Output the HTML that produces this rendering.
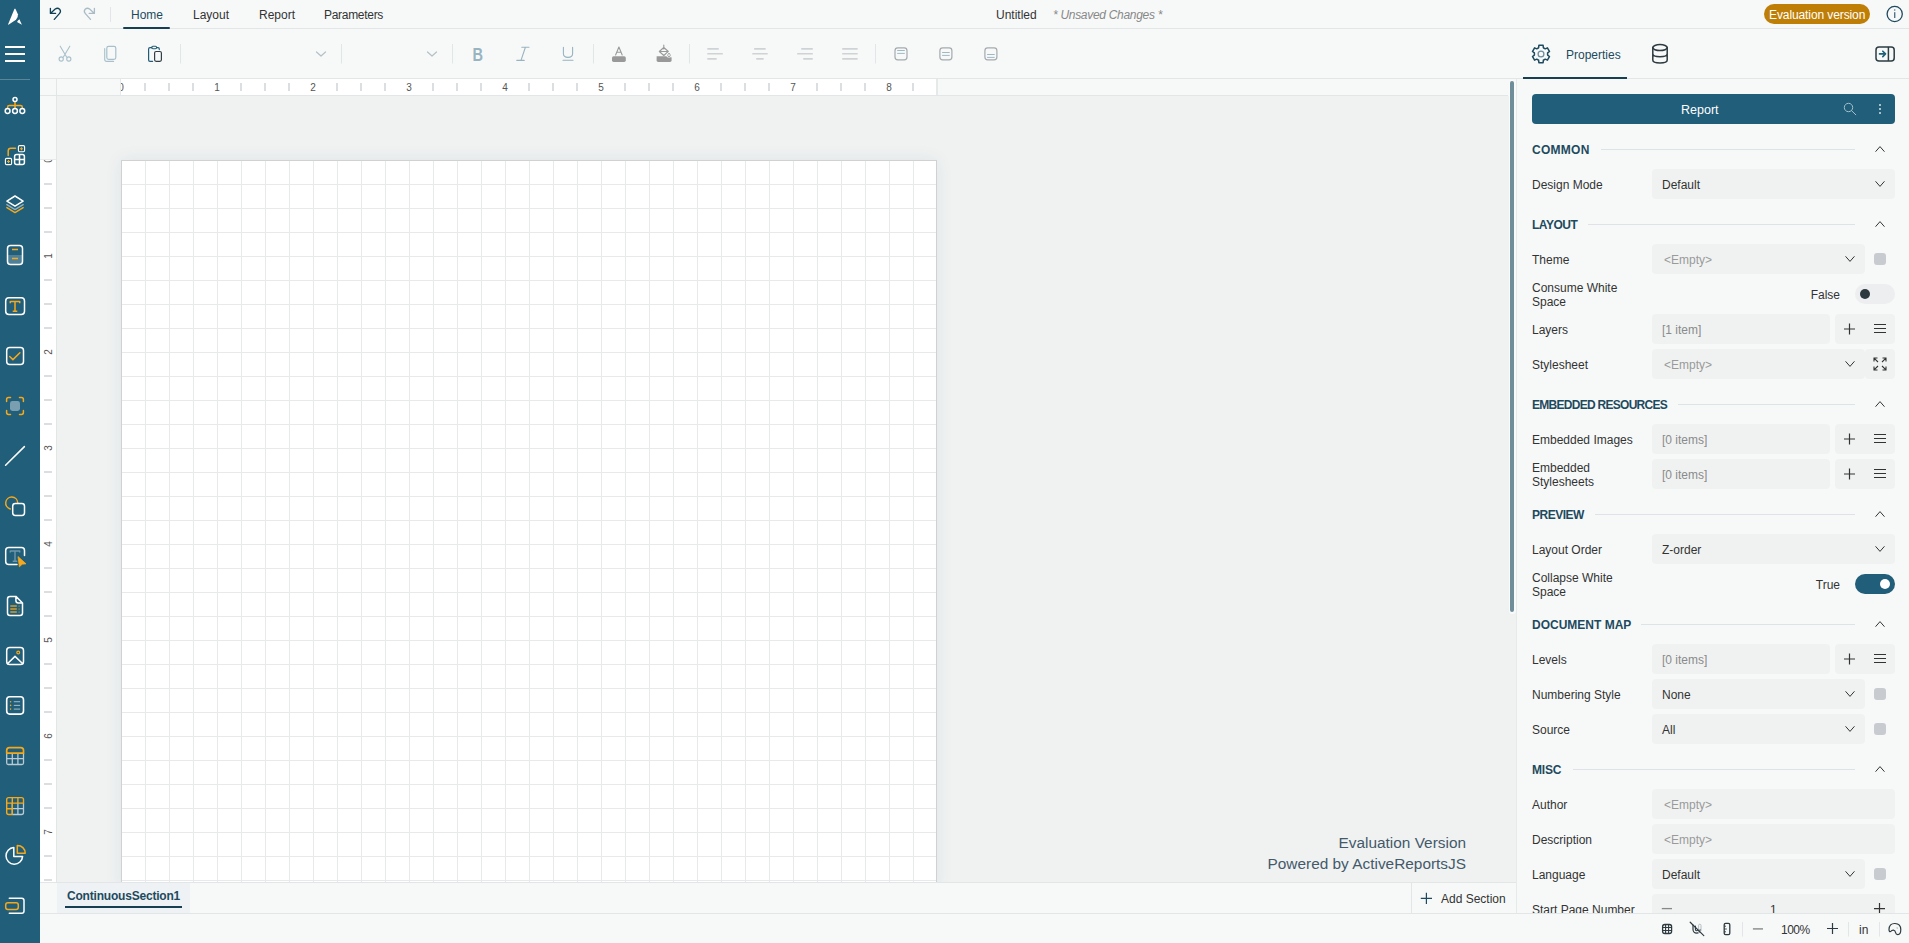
<!DOCTYPE html><html><head><meta charset="utf-8"><style>
*{box-sizing:border-box}
html,body{margin:0;padding:0}
body{width:1909px;height:943px;overflow:hidden;position:relative;background:#f7f9f9;font-family:"Liberation Sans",sans-serif;color:#333}
.a{position:absolute}
.t{position:absolute;white-space:nowrap;line-height:1}
svg{position:absolute;overflow:visible}
</style></head><body><div class="a" style="left:0;top:0;width:40px;height:943px;background:#205e79"></div>
<div class="a" style="left:0;top:79px;width:30px;height:1px;background:#5b8599"></div>
<svg class="a" style="left:0px;top:0px" width="40" height="943" viewBox="0 0 40 943" ><path d="M14.5 8.8 L15.4 8.8 L17.9 14.2 Q18.3 17.6 16 19.7 L8.4 24.8 L8 24.4 Z" fill="#ffffff"/><path d="M19.4 19.2 L21.9 24.8 L17 21.9 Q17.9 20.3 19.4 19.2 Z" fill="#ffffff"/><rect x="5" y="46" width="20" height="2" fill="#ffffff"/><rect x="5" y="53" width="20" height="2" fill="#ffffff"/><rect x="5" y="60" width="20" height="2" fill="#ffffff"/><path d="M15 101.8 V108.6 M7.6 108.6 V107.3 Q7.6 105.6 9.3 105.6 H20.6 Q22.3 105.6 22.3 107.3 V108.6" stroke="#f5a81c" stroke-width="1.5" fill="none" stroke-linecap="round" stroke-linejoin="round"/><circle cx="15" cy="99.6" r="2" stroke="#ffffff" stroke-width="1.5" fill="none" stroke-linecap="round" stroke-linejoin="round"/><circle cx="7.6" cy="111" r="2.4" stroke="#ffffff" stroke-width="1.5" fill="none" stroke-linecap="round" stroke-linejoin="round"/><circle cx="15" cy="111" r="2.4" stroke="#ffffff" stroke-width="1.5" fill="none" stroke-linecap="round" stroke-linejoin="round"/><circle cx="22.3" cy="111" r="2.4" stroke="#ffffff" stroke-width="1.5" fill="none" stroke-linecap="round" stroke-linejoin="round"/><path d="M8.2 155.5 V151 Q8.2 148.3 10.9 148.3 H15.5" stroke="#f5a81c" stroke-width="1.5" fill="none" stroke-linecap="round" stroke-linejoin="round"/><rect x="18.4" y="145.6" width="6.2" height="6.2" rx="1.2" stroke="#ffffff" stroke-width="1.1" fill="none"/><path d="M21.5 147.2 V150.2 M20 148.7 H23" stroke="#f5a81c" stroke-width="1.1"/><rect x="5.4" y="158.4" width="6.2" height="6.2" rx="1.2" stroke="#ffffff" stroke-width="1.1" fill="none"/><path d="M8.5 160 V163 M7 161.5 H10" stroke="#f5a81c" stroke-width="1.1"/><rect x="14.6" y="154.6" width="9.8" height="9.8" rx="2" stroke="#ffffff" stroke-width="1.5" fill="none"/><path d="M19.5 154.6 V164.4 M14.6 159.5 H24.4" stroke="#ffffff" stroke-width="1.5"/><path d="M6.9 207.6 L15 212.6 L23.1 207.6" stroke="#f5a81c" stroke-width="1.5" fill="none" stroke-linecap="round" stroke-linejoin="round"/><path d="M6.9 204.6 L15 209.6 L23.1 204.6" stroke="#8fb0be" stroke-width="1.5" fill="none" stroke-linecap="round" stroke-linejoin="round"/><path d="M6.9 201.1 L15 196 L23.1 201.1 L15 206.2 Z" stroke="#ffffff" stroke-width="1.5" fill="none" stroke-linecap="round" stroke-linejoin="round"/><rect x="7.8" y="255" width="14.4" height="9.3" fill="#4f8098"/><rect x="7.5" y="245.6" width="15" height="18.8" rx="3" stroke="#ffffff" stroke-width="1.5" fill="none" stroke-linecap="round" stroke-linejoin="round"/><path d="M12 249.5 H18 M12 258.4 H18" stroke="#f5a81c" stroke-width="1.5"/><rect x="5.7" y="297.7" width="18.8" height="16.8" rx="3.2" stroke="#ffffff" stroke-width="1.5" fill="none" stroke-linecap="round" stroke-linejoin="round"/><path d="M10.3 301.6 H19.7 M10.3 301 V303.3 M19.7 301 V303.3 M15 301.6 V311.3 M12.7 311.3 H17.3" stroke="#f5a81c" stroke-width="1.5" fill="none"/><rect x="6.7" y="347.5" width="16.8" height="16.9" rx="3" stroke="#ffffff" stroke-width="1.5" fill="none" stroke-linecap="round" stroke-linejoin="round"/><path d="M9.7 356.5 L12.9 359.6 L19.9 352.8" stroke="#f5a81c" stroke-width="1.5" fill="none" stroke-linecap="round" stroke-linejoin="round"/><rect x="10" y="401" width="10" height="10" rx="2.4" fill="#7a9fb1"/><path d="M6.6 401.5 V399.5 Q6.6 397.6 8.5 397.6 H10.5 M19.5 397.6 H21.5 Q23.4 397.6 23.4 399.5 V401.5 M23.4 410.5 V412.5 Q23.4 414.4 21.5 414.4 H19.5 M10.5 414.4 H8.5 Q6.6 414.4 6.6 412.5 V410.5" stroke="#f5a81c" stroke-width="1.5" fill="none" stroke-linecap="round" stroke-linejoin="round"/><path d="M5.6 465.2 L24.4 446.6" stroke="#ffffff" stroke-width="1.5" fill="none" stroke-linecap="round" stroke-linejoin="round"/><path d="M10.3 508.9 A6 6 0 1 1 17.7 502.7" stroke="#f5a81c" stroke-width="1.5" fill="none" stroke-linecap="round" stroke-linejoin="round"/><rect x="12.7" y="503.6" width="11.8" height="11.8" rx="2.6" stroke="#ffffff" stroke-width="1.5" fill="none" stroke-linecap="round" stroke-linejoin="round"/><path d="M24.5 555.5 V550.6 Q24.5 547.6 21.5 547.6 H8.8 Q5.7 547.6 5.7 550.6 V561.4 Q5.7 564.4 8.8 564.4 H17" stroke="#ffffff" stroke-width="1.5" fill="none" stroke-linecap="round" stroke-linejoin="round"/><path d="M10.3 551 H19.7 M10.3 550.5 V552.5 M19.7 550.5 V552.5 M15 551 V561.3 M12.7 561.3 H17.3" stroke="#6f97aa" stroke-width="1.4" fill="none"/><path d="M18 556.6 L26 563.8 L22.2 564.2 L19.4 566.8 Z" fill="#f5a81c" stroke="#f5a81c" stroke-width="0.8" stroke-linejoin="round"/><path d="M15.9 596.4 H10 Q7.5 596.4 7.5 598.9 V613 Q7.5 615.5 10 615.5 H20 Q22.5 615.5 22.5 613 V603 Z M15.9 596.4 V600.5 Q15.9 603 18.4 603 H22.5" stroke="#ffffff" stroke-width="1.5" fill="none" stroke-linecap="round" stroke-linejoin="round"/><path d="M10.3 606 H16.8" stroke="#f5a81c" stroke-width="1.3"/><circle cx="19.1" cy="606" r="0.6" fill="#f5a81c"/><path d="M10.3 609 H16.8" stroke="#f5a81c" stroke-width="1.3"/><circle cx="19.1" cy="609" r="0.6" fill="#f5a81c"/><path d="M10.3 612 H16.8" stroke="#f5a81c" stroke-width="1.3"/><circle cx="19.1" cy="612" r="0.6" fill="#f5a81c"/><rect x="6.7" y="647.5" width="16.8" height="16.9" rx="3" stroke="#ffffff" stroke-width="1.5" fill="none" stroke-linecap="round" stroke-linejoin="round"/><path d="M7.4 663.7 L15 656.4 L22.8 663.7" stroke="#ffffff" stroke-width="1.5" fill="none" stroke-linecap="round" stroke-linejoin="round"/><circle cx="18.2" cy="652.6" r="1.4" stroke="#f5a81c" stroke-width="1.2" fill="none"/><rect x="6.7" y="696.7" width="16.8" height="17.4" rx="3" stroke="#ffffff" stroke-width="1.6" fill="none"/><circle cx="10.6" cy="701.7" r="0.8" fill="#f5a81c"/><path d="M13.8 701.7 H20.1" stroke="#9bb6c3" stroke-width="1.1"/><circle cx="10.6" cy="705.4" r="0.8" fill="#f5a81c"/><path d="M13.8 705.4 H20.1" stroke="#9bb6c3" stroke-width="1.1"/><circle cx="10.6" cy="709.1" r="0.8" fill="#f5a81c"/><path d="M13.8 709.1 H20.1" stroke="#9bb6c3" stroke-width="1.1"/><path d="M6.7 753 V763 Q6.7 764.5 8.2 764.5 H22 Q23.5 764.5 23.5 763 V753 M12.3 753 V764.5 M17.9 753 V764.5 M6.7 758.7 H23.5" stroke="#b9cad2" stroke-width="1.3" fill="none"/><path d="M6.7 753.2 V750.3 Q6.7 747.6 9.4 747.6 H20.8 Q23.5 747.6 23.5 750.3 V753.2 Z" stroke="#f5a81c" stroke-width="1.7" fill="none" stroke-linejoin="round"/><path d="M12.3 808.7 H23.5 M12.3 803.1 V814.5 M17.9 803.1 V814.5 M23.5 803.1 V812.5 Q23.5 814.5 21.5 814.5 H12.3" stroke="#b9cad2" stroke-width="1.3" fill="none"/><path d="M12.3 814.5 H8.7 Q6.7 814.5 6.7 812.5 V799.6 Q6.7 797.6 8.7 797.6 H21.5 Q23.5 797.6 23.5 799.6 V803.1 H6.7 M6.7 808.7 H12.3 M12.3 797.6 V814.5 M17.9 797.6 V803.1" stroke="#f5a81c" stroke-width="1.4" fill="none" stroke-linejoin="round"/><path d="M13.8 847.6 A8.3 8.3 0 1 0 22.6 856.4 H13.8 Z" stroke="#ffffff" stroke-width="1.5" fill="none" stroke-linecap="round" stroke-linejoin="round"/><path d="M17.3 845.4 A7.8 7.8 0 0 1 25.2 853.2 H17.3 Z" stroke="#f5a81c" stroke-width="1.5" fill="none" stroke-linecap="round" stroke-linejoin="round"/><path d="M9.3 898.3 H21.7 Q24 898.3 24 900.6 V910.9 Q24 913.2 21.7 913.2 H9.3" stroke="#ffffff" stroke-width="1.5" fill="none" stroke-linecap="round" stroke-linejoin="round"/><rect x="5.7" y="902.8" width="12.6" height="6.6" rx="2.2" stroke="#f5a81c" stroke-width="1.5" fill="none" stroke-linecap="round" stroke-linejoin="round"/></svg>
<svg class="a" style="left:40px;top:0px" width="1869" height="79" viewBox="40 0 1869 79" ><path d="M50.4 8.3 V13.4 H55.6 M50.9 12.9 L55.2 9.1 Q57.6 7.3 59.6 9.2 Q61.4 11.3 59.6 13.4 L54.3 19.4" stroke="#0f3f55" stroke-width="1.3" fill="none" stroke-linecap="round" stroke-linejoin="round"/><path d="M94.4 8.3 V13.4 H89.2 M93.9 12.9 L89.6 9.1 Q87.2 7.3 85.2 9.2 Q83.4 11.3 85.2 13.4 L90.5 19.4" stroke="#a9bcc5" stroke-width="1.3" fill="none" stroke-linecap="round" stroke-linejoin="round"/><rect x="110" y="7" width="1" height="15" fill="#e2e6e7"/><circle cx="1894.7" cy="14" r="7.6" stroke="#1e4a5e" stroke-width="1.3" fill="none"/><rect x="1894" y="12.2" width="1.4" height="5.8" fill="#4f7587"/><circle cx="1894.7" cy="10" r="0.8" fill="#4f7587"/><path d="M60.2 46.2 L66.6 57 M69.8 46.2 L63.4 57" stroke="#a9c0ca" stroke-width="1.1" fill="none" stroke-linecap="round" stroke-linejoin="round"/><circle cx="61.2" cy="59" r="2.1" stroke="#a9c0ca" stroke-width="1.1" fill="none"/><circle cx="68.8" cy="59" r="2.1" stroke="#a9c0ca" stroke-width="1.1" fill="none"/><rect x="106.8" y="46.4" width="9" height="13" rx="1.8" stroke="#a9c0ca" stroke-width="1.2" fill="none"/><path d="M104.7 48.5 V59.3 Q104.7 61.4 106.8 61.4 H113.6" stroke="#a9c0ca" stroke-width="1.1" fill="none" stroke-linecap="round" stroke-linejoin="round"/><path d="M151.8 47.6 H150 Q148.6 47.6 148.6 49 V59.9 Q148.6 61.3 150 61.3 H152.6 M156.6 47.6 H158 Q159.3 47.6 159.3 49 V49.6" stroke="#215c77" stroke-width="1.2" fill="none" stroke-linecap="round" stroke-linejoin="round"/><rect x="151.7" y="46.3" width="4.9" height="2.5" rx="1.2" stroke="#215c77" stroke-width="1.1" fill="none"/><rect x="154.6" y="51.5" width="6.8" height="9.8" rx="1.5" stroke="#333f44" stroke-width="1.2" fill="none"/><rect x="180" y="44" width="1" height="19.5" fill="#e2e6e7"/><rect x="341" y="44" width="1" height="19.5" fill="#e2e6e7"/><rect x="452" y="44" width="1" height="19.5" fill="#e2e6e7"/><rect x="593" y="44" width="1" height="19.5" fill="#e2e6e7"/><rect x="689" y="44" width="1" height="19.5" fill="#e2e6e7"/><rect x="875" y="44" width="1" height="19.5" fill="#e2e6e7"/><path d="M316.5 52 L321 56 L325.5 52" stroke="#b5c0c5" stroke-width="1.2" fill="none" stroke-linecap="round" stroke-linejoin="round"/><path d="M427.5 52 L432 56 L436.5 52" stroke="#b5c0c5" stroke-width="1.2" fill="none" stroke-linecap="round" stroke-linejoin="round"/><text transform="translate(472.5 60.8) scale(0.76 1)" font-family="Liberation Sans" font-weight="bold" font-size="19.2" fill="#98b4c0">B</text><path d="M525.4 47.3 L521 60.4 M521.8 47.3 H529 M516.8 60.4 H524.2" stroke="#98b4c0" stroke-width="1.1" fill="none" stroke-linecap="round" stroke-linejoin="round"/><path d="M563.4 47.4 V53.8 Q563.4 57.4 568 57.4 Q572.6 57.4 572.6 53.8 V47.4 M563 60.3 H573" stroke="#98b4c0" stroke-width="1.1" fill="none" stroke-linecap="round" stroke-linejoin="round"/><path d="M615.6 55 L618.9 47 L622.2 55 M616.8 52.3 H621" stroke="#9a9a9a" stroke-width="1.1" fill="none" stroke-linecap="round" stroke-linejoin="round"/><rect x="612" y="56.3" width="13.8" height="5.6" rx="1.6" fill="#999"/><path d="M663.8 45 V49 M659.3 51.5 L663.8 47.5 L668.3 51.5 L663.8 55.5 Z M659.3 51.5 H668.3" stroke="#9a9a9a" stroke-width="1.1" fill="none" stroke-linecap="round" stroke-linejoin="round"/><path d="M656.6 56.3 H670 Q671.6 56.3 671.6 57.9 V60.3 Q671.6 61.9 670 61.9 H658.2 Q656.6 61.9 656.6 60.3 Z" fill="#999"/><circle cx="669" cy="55" r="2.6" fill="#f7f9f9"/><path d="M669 53 Q670.3 54.6 670.3 55.4 Q670.3 56.6 669 56.6 Q667.7 56.6 667.7 55.4 Q667.7 54.6 669 53 Z" stroke="#9a9a9a" stroke-width="0.9" fill="none"/><rect x="707.2" y="48.1" width="11.699999999999932" height="1.6" rx="0.6" fill="#cfd3d5"/><rect x="707.2" y="53.0" width="15.699999999999932" height="1.6" rx="0.6" fill="#cfd3d5"/><rect x="707.2" y="58.1" width="9.599999999999909" height="1.6" rx="0.6" fill="#cfd3d5"/><rect x="754" y="48.1" width="11.799999999999955" height="1.6" rx="0.6" fill="#cfd3d5"/><rect x="752.2" y="53.0" width="15.599999999999909" height="1.6" rx="0.6" fill="#cfd3d5"/><rect x="756.1" y="58.1" width="7.699999999999932" height="1.6" rx="0.6" fill="#cfd3d5"/><rect x="801.1" y="48.1" width="11.799999999999955" height="1.6" rx="0.6" fill="#cfd3d5"/><rect x="797.1" y="53.0" width="15.799999999999955" height="1.6" rx="0.6" fill="#cfd3d5"/><rect x="803.1" y="58.1" width="9.799999999999955" height="1.6" rx="0.6" fill="#cfd3d5"/><rect x="842.1" y="48.1" width="15.699999999999932" height="1.6" rx="0.6" fill="#cfd3d5"/><rect x="842.1" y="53.0" width="15.699999999999932" height="1.6" rx="0.6" fill="#cfd3d5"/><rect x="842.1" y="58.1" width="15.699999999999932" height="1.6" rx="0.6" fill="#cfd3d5"/><rect x="895.0" y="47.9" width="12" height="12" rx="2.8" stroke="#a5aaae" stroke-width="1.2" fill="none"/><path d="M897.1999999999999 50.5 H904.8 M897.1999999999999 53.4 H904.8" stroke="#9fb8c4" stroke-width="1"/><rect x="939.9" y="47.9" width="12" height="12" rx="2.8" stroke="#a5aaae" stroke-width="1.2" fill="none"/><path d="M942.0999999999999 52.5 H949.6999999999999 M942.0999999999999 55.4 H949.6999999999999" stroke="#9fb8c4" stroke-width="1"/><rect x="984.9" y="47.9" width="12" height="12" rx="2.8" stroke="#a5aaae" stroke-width="1.2" fill="none"/><path d="M987.0999999999999 54.5 H994.6999999999999 M987.0999999999999 57.4 H994.6999999999999" stroke="#9fb8c4" stroke-width="1"/></svg>
<div class="a" style="left:40px;top:28px;width:1869px;height:1px;background:#e2e6e7"></div>
<div class="t" style="left:131px;top:9px;font-size:12px;color:#1e4a5e">Home</div>
<div class="a" style="left:123px;top:27px;width:47px;height:2px;background:#173f52;border-radius:1px"></div>
<div class="t" style="left:193px;top:9px;font-size:12px;color:#333">Layout</div>
<div class="t" style="left:259px;top:9px;font-size:12px;color:#333">Report</div>
<div class="t" style="left:324px;top:9px;font-size:12px;color:#333;letter-spacing:-0.3px">Parameters</div>
<div class="t" style="left:996px;top:9px;font-size:12px;color:#333">Untitled</div>
<div class="t" style="left:1053px;top:9px;font-size:12px;font-style:italic;color:#888;letter-spacing:-0.3px">* Unsaved Changes *</div>
<div class="a" style="left:1764px;top:4px;width:106px;height:20px;border-radius:10px;background:#bf7f07"></div>
<div class="t" style="left:1769px;top:9px;font-size:12px;color:#fff;letter-spacing:-0.1px">Evaluation version</div>
<div class="a" style="left:40px;top:78px;width:1869px;height:1px;background:#e2e6e7"></div>
<div class="a" style="left:1523px;top:77px;width:104px;height:2px;background:#173f52"></div>
<div class="t" style="left:1566px;top:49px;font-size:12px;color:#1e4a5e">Properties</div>
<div class="a" style="left:121px;top:79px;width:815px;height:16px;background:#fff"></div>
<div class="a" style="left:120px;top:79px;width:1px;height:16px;background:#e6e9ea"></div>
<div class="a" style="left:936px;top:79px;width:2px;height:16px;background:#e6e9ea"></div>
<div class="a" style="left:40px;top:95px;width:1468px;height:1px;background:#e2e6e7"></div>
<div class="a" style="left:57px;top:96px;width:1459px;height:786px;background:#f0f2f2"></div>
<div class="a" style="left:56px;top:79px;width:1px;height:834px;background:#e2e6e7"></div>
<div class="a" style="left:40px;top:159px;width:16px;height:1px;background:#e6e9ea"></div>
<div class="a" style="left:40px;top:160px;width:16px;height:722px;background:#fff"></div>
<div class="t" style="left:111px;top:83px;width:20px;text-align:center;font-size:10px;color:#555">0</div>
<div class="a" style="left:144px;top:83px;width:2px;height:8px;background:#dcdfe1"></div>
<div class="a" style="left:168px;top:83px;width:2px;height:8px;background:#dcdfe1"></div>
<div class="a" style="left:192px;top:83px;width:2px;height:8px;background:#dcdfe1"></div>
<div class="t" style="left:207px;top:83px;width:20px;text-align:center;font-size:10px;color:#555">1</div>
<div class="a" style="left:240px;top:83px;width:2px;height:8px;background:#dcdfe1"></div>
<div class="a" style="left:264px;top:83px;width:2px;height:8px;background:#dcdfe1"></div>
<div class="a" style="left:288px;top:83px;width:2px;height:8px;background:#dcdfe1"></div>
<div class="t" style="left:303px;top:83px;width:20px;text-align:center;font-size:10px;color:#555">2</div>
<div class="a" style="left:336px;top:83px;width:2px;height:8px;background:#dcdfe1"></div>
<div class="a" style="left:360px;top:83px;width:2px;height:8px;background:#dcdfe1"></div>
<div class="a" style="left:384px;top:83px;width:2px;height:8px;background:#dcdfe1"></div>
<div class="t" style="left:399px;top:83px;width:20px;text-align:center;font-size:10px;color:#555">3</div>
<div class="a" style="left:432px;top:83px;width:2px;height:8px;background:#dcdfe1"></div>
<div class="a" style="left:456px;top:83px;width:2px;height:8px;background:#dcdfe1"></div>
<div class="a" style="left:480px;top:83px;width:2px;height:8px;background:#dcdfe1"></div>
<div class="t" style="left:495px;top:83px;width:20px;text-align:center;font-size:10px;color:#555">4</div>
<div class="a" style="left:528px;top:83px;width:2px;height:8px;background:#dcdfe1"></div>
<div class="a" style="left:552px;top:83px;width:2px;height:8px;background:#dcdfe1"></div>
<div class="a" style="left:576px;top:83px;width:2px;height:8px;background:#dcdfe1"></div>
<div class="t" style="left:591px;top:83px;width:20px;text-align:center;font-size:10px;color:#555">5</div>
<div class="a" style="left:624px;top:83px;width:2px;height:8px;background:#dcdfe1"></div>
<div class="a" style="left:648px;top:83px;width:2px;height:8px;background:#dcdfe1"></div>
<div class="a" style="left:672px;top:83px;width:2px;height:8px;background:#dcdfe1"></div>
<div class="t" style="left:687px;top:83px;width:20px;text-align:center;font-size:10px;color:#555">6</div>
<div class="a" style="left:720px;top:83px;width:2px;height:8px;background:#dcdfe1"></div>
<div class="a" style="left:744px;top:83px;width:2px;height:8px;background:#dcdfe1"></div>
<div class="a" style="left:768px;top:83px;width:2px;height:8px;background:#dcdfe1"></div>
<div class="t" style="left:783px;top:83px;width:20px;text-align:center;font-size:10px;color:#555">7</div>
<div class="a" style="left:816px;top:83px;width:2px;height:8px;background:#dcdfe1"></div>
<div class="a" style="left:840px;top:83px;width:2px;height:8px;background:#dcdfe1"></div>
<div class="a" style="left:864px;top:83px;width:2px;height:8px;background:#dcdfe1"></div>
<div class="t" style="left:879px;top:83px;width:20px;text-align:center;font-size:10px;color:#555">8</div>
<div class="a" style="left:912px;top:83px;width:2px;height:8px;background:#dcdfe1"></div>
<div class="a" style="left:40px;top:160px;width:16px;height:722px;overflow:hidden"><div class="t" style="left:-1px;top:-5px;width:20px;text-align:center;font-size:10px;color:#555;transform:rotate(-90deg)">0</div><div class="a" style="left:4px;top:23px;width:8px;height:2px;background:#dcdfe1"></div><div class="a" style="left:4px;top:47px;width:8px;height:2px;background:#dcdfe1"></div><div class="a" style="left:4px;top:71px;width:8px;height:2px;background:#dcdfe1"></div><div class="t" style="left:-1px;top:91px;width:20px;text-align:center;font-size:10px;color:#555;transform:rotate(-90deg)">1</div><div class="a" style="left:4px;top:119px;width:8px;height:2px;background:#dcdfe1"></div><div class="a" style="left:4px;top:143px;width:8px;height:2px;background:#dcdfe1"></div><div class="a" style="left:4px;top:167px;width:8px;height:2px;background:#dcdfe1"></div><div class="t" style="left:-1px;top:187px;width:20px;text-align:center;font-size:10px;color:#555;transform:rotate(-90deg)">2</div><div class="a" style="left:4px;top:215px;width:8px;height:2px;background:#dcdfe1"></div><div class="a" style="left:4px;top:239px;width:8px;height:2px;background:#dcdfe1"></div><div class="a" style="left:4px;top:263px;width:8px;height:2px;background:#dcdfe1"></div><div class="t" style="left:-1px;top:283px;width:20px;text-align:center;font-size:10px;color:#555;transform:rotate(-90deg)">3</div><div class="a" style="left:4px;top:311px;width:8px;height:2px;background:#dcdfe1"></div><div class="a" style="left:4px;top:335px;width:8px;height:2px;background:#dcdfe1"></div><div class="a" style="left:4px;top:359px;width:8px;height:2px;background:#dcdfe1"></div><div class="t" style="left:-1px;top:379px;width:20px;text-align:center;font-size:10px;color:#555;transform:rotate(-90deg)">4</div><div class="a" style="left:4px;top:407px;width:8px;height:2px;background:#dcdfe1"></div><div class="a" style="left:4px;top:431px;width:8px;height:2px;background:#dcdfe1"></div><div class="a" style="left:4px;top:455px;width:8px;height:2px;background:#dcdfe1"></div><div class="t" style="left:-1px;top:475px;width:20px;text-align:center;font-size:10px;color:#555;transform:rotate(-90deg)">5</div><div class="a" style="left:4px;top:503px;width:8px;height:2px;background:#dcdfe1"></div><div class="a" style="left:4px;top:527px;width:8px;height:2px;background:#dcdfe1"></div><div class="a" style="left:4px;top:551px;width:8px;height:2px;background:#dcdfe1"></div><div class="t" style="left:-1px;top:571px;width:20px;text-align:center;font-size:10px;color:#555;transform:rotate(-90deg)">6</div><div class="a" style="left:4px;top:599px;width:8px;height:2px;background:#dcdfe1"></div><div class="a" style="left:4px;top:623px;width:8px;height:2px;background:#dcdfe1"></div><div class="a" style="left:4px;top:647px;width:8px;height:2px;background:#dcdfe1"></div><div class="t" style="left:-1px;top:667px;width:20px;text-align:center;font-size:10px;color:#555;transform:rotate(-90deg)">7</div><div class="a" style="left:4px;top:695px;width:8px;height:2px;background:#dcdfe1"></div><div class="a" style="left:4px;top:719px;width:8px;height:2px;background:#dcdfe1"></div></div>
<div class="a" style="left:110px;top:79px;width:10px;height:16px;background:#f7f9f9"></div>
<div class="a" style="left:120px;top:79px;width:1px;height:16px;background:#e6e9ea"></div>
<div class="a" style="left:121px;top:160px;width:816px;height:730px;border:1px solid #d0d1d2;box-shadow:0 0 16px rgba(30,74,94,0.08);background-color:#fff;background-image:linear-gradient(to right,#e8e9ea 1px,transparent 1px),linear-gradient(to bottom,#e8e9ea 1px,transparent 1px);background-size:24px 24px;background-position:-1px -1px"></div>
<div class="a" style="left:1508.5px;top:79.5px;width:7px;height:534px;border-radius:3.5px;background:#f9fafa"></div><div class="a" style="left:1510px;top:81px;width:4px;height:531px;border-radius:2px;background:#6f8e9a"></div>
<div class="t" style="left:1200px;top:832px;width:266px;text-align:right;font-size:15.4px;line-height:21px;color:#44596a">Evaluation Version<br>Powered by ActiveReportsJS</div>
<div class="a" style="left:40px;top:882px;width:1476px;height:31px;background:#f7f9f9;border-top:1px solid #e2e6e7"></div>
<div class="a" style="left:57px;top:883px;width:133px;height:30px;background:#eef2f4"></div>
<div class="t" style="left:67px;top:890px;font-size:12px;font-weight:bold;color:#1e4a5e;letter-spacing:-0.2px">ContinuousSection1</div>
<div class="a" style="left:65px;top:906px;width:117px;height:2px;background:#173f52"></div>
<div class="a" style="left:1411px;top:883px;width:1px;height:30px;background:#e2e6e7"></div>
<div class="t" style="left:1441px;top:893px;font-size:12px;color:#333">Add Section</div>
<div class="a" style="left:40px;top:913px;width:1869px;height:1px;background:#e2e6e7"></div>
<div class="t" style="left:1781px;top:924px;letter-spacing:-0.5px;font-size:12px;color:#333">100%</div>
<div class="t" style="left:1859px;top:924px;font-size:12px;color:#333">in</div>
<div class="a" style="left:1516px;top:79px;width:1px;height:834px;background:#e6eaeb"></div>
<div class="a" style="left:1532px;top:94px;width:363px;height:30px;border-radius:4px;background:#205e79"></div>
<div class="t" style="left:1681px;top:104px;font-size:12.5px;color:#fff">Report</div>
<div class="a" style="left:0;top:0;width:1909px;height:913px;overflow:hidden;clip-path:inset(79px 0 0 1516px)"><div class="t" style="left:1532px;top:143.8px;font-size:12px;color:#1e4a5e;font-weight:bold;letter-spacing:0.27px">COMMON</div><div class="a" style="left:1600.6px;top:149px;width:254.4000000000001px;height:1px;background:#dde3e6"></div><div class="t" style="left:1532px;top:179.3px;font-size:12px;color:#333;">Design Mode</div><div class="a" style="left:1652px;top:169px;width:243px;height:30px;background:#f0f2f2;border-radius:4px;"></div><div class="t" style="left:1662px;top:179.3px;font-size:12px;color:#333;">Default</div><div class="t" style="left:1532px;top:218.8px;font-size:12px;color:#1e4a5e;font-weight:bold;letter-spacing:-0.47px">LAYOUT</div><div class="a" style="left:1588.4px;top:224px;width:266.5999999999999px;height:1px;background:#dde3e6"></div><div class="t" style="left:1532px;top:254.3px;font-size:12px;color:#333;">Theme</div><div class="a" style="left:1652px;top:244px;width:213px;height:30px;background:#f0f2f2;border-radius:4px;"></div><div class="t" style="left:1664px;top:254.3px;font-size:12px;color:#9a9a9a;">&lt;Empty&gt;</div><div class="a" style="left:1874px;top:253px;width:12px;height:12px;background:#c8ccd0;border-radius:3px;"></div><div class="t" style="left:1532px;top:281.5px;font-size:12px;color:#333;">Consume White</div><div class="t" style="left:1532px;top:296.1px;font-size:12px;color:#333;">Space</div><div class="t" style="left:1640px;width:200px;text-align:right;top:288.8px;font-size:12px;color:#333;">False</div><div class="a" style="left:1855px;top:284px;width:40px;height:20px;background:#eceeef;border-radius:10px;"></div><div class="a" style="left:1860px;top:289px;width:10px;height:10px;background:#2d3a40;border-radius:5px;"></div><div class="t" style="left:1532px;top:324.3px;font-size:12px;color:#333;">Layers</div><div class="a" style="left:1652px;top:314px;width:178px;height:30px;background:#f0f2f2;border-radius:4px;"></div><div class="t" style="left:1662px;top:324.3px;font-size:12px;color:#8a8a8a;">[1 item]</div><div class="a" style="left:1835px;top:314px;width:60px;height:30px;background:#f0f2f2;border-radius:4px;"></div><div class="t" style="left:1532px;top:359.3px;font-size:12px;color:#333;">Stylesheet</div><div class="a" style="left:1652px;top:349px;width:213px;height:30px;background:#f0f2f2;border-radius:4px;"></div><div class="t" style="left:1664px;top:359.3px;font-size:12px;color:#9a9a9a;">&lt;Empty&gt;</div><div class="a" style="left:1865px;top:349px;width:30px;height:30px;background:#f0f2f2;border-radius:4px;"></div><div class="t" style="left:1532px;top:398.8px;font-size:12px;color:#1e4a5e;font-weight:bold;letter-spacing:-0.72px">EMBEDDED RESOURCES</div><div class="a" style="left:1678px;top:404px;width:177px;height:1px;background:#dde3e6"></div><div class="t" style="left:1532px;top:434.3px;font-size:12px;color:#333;">Embedded Images</div><div class="a" style="left:1652px;top:424px;width:178px;height:30px;background:#f0f2f2;border-radius:4px;"></div><div class="t" style="left:1662px;top:434.3px;font-size:12px;color:#8a8a8a;">[0 items]</div><div class="a" style="left:1835px;top:424px;width:60px;height:30px;background:#f0f2f2;border-radius:4px;"></div><div class="t" style="left:1532px;top:461.5px;font-size:12px;color:#333;">Embedded</div><div class="t" style="left:1532px;top:476.1px;font-size:12px;color:#333;">Stylesheets</div><div class="a" style="left:1652px;top:459px;width:178px;height:30px;background:#f0f2f2;border-radius:4px;"></div><div class="t" style="left:1662px;top:469.3px;font-size:12px;color:#8a8a8a;">[0 items]</div><div class="a" style="left:1835px;top:459px;width:60px;height:30px;background:#f0f2f2;border-radius:4px;"></div><div class="t" style="left:1532px;top:508.8px;font-size:12px;color:#1e4a5e;font-weight:bold;letter-spacing:-0.5px">PREVIEW</div><div class="a" style="left:1595px;top:514px;width:260px;height:1px;background:#dde3e6"></div><div class="t" style="left:1532px;top:544.3px;font-size:12px;color:#333;">Layout Order</div><div class="a" style="left:1652px;top:534px;width:243px;height:30px;background:#f0f2f2;border-radius:4px;"></div><div class="t" style="left:1662px;top:544.3px;font-size:12px;color:#333;">Z-order</div><div class="t" style="left:1532px;top:571.5px;font-size:12px;color:#333;">Collapse White</div><div class="t" style="left:1532px;top:586.1px;font-size:12px;color:#333;">Space</div><div class="t" style="left:1640px;width:200px;text-align:right;top:578.8px;font-size:12px;color:#333;">True</div><div class="a" style="left:1855px;top:574px;width:40px;height:20px;background:#205e79;border-radius:10px;"></div><div class="a" style="left:1880px;top:579px;width:10px;height:10px;background:#fff;border-radius:5px;"></div><div class="t" style="left:1532px;top:618.8px;font-size:12px;color:#1e4a5e;font-weight:bold;letter-spacing:0px">DOCUMENT MAP</div><div class="a" style="left:1641px;top:624px;width:214px;height:1px;background:#dde3e6"></div><div class="t" style="left:1532px;top:654.3px;font-size:12px;color:#333;">Levels</div><div class="a" style="left:1652px;top:644px;width:178px;height:30px;background:#f0f2f2;border-radius:4px;"></div><div class="t" style="left:1662px;top:654.3px;font-size:12px;color:#8a8a8a;">[0 items]</div><div class="a" style="left:1835px;top:644px;width:60px;height:30px;background:#f0f2f2;border-radius:4px;"></div><div class="t" style="left:1532px;top:689.3px;font-size:12px;color:#333;">Numbering Style</div><div class="a" style="left:1652px;top:679px;width:213px;height:30px;background:#f0f2f2;border-radius:4px;"></div><div class="t" style="left:1662px;top:689.3px;font-size:12px;color:#333;">None</div><div class="a" style="left:1874px;top:688px;width:12px;height:12px;background:#c8ccd0;border-radius:3px;"></div><div class="t" style="left:1532px;top:724.3px;font-size:12px;color:#333;">Source</div><div class="a" style="left:1652px;top:714px;width:213px;height:30px;background:#f0f2f2;border-radius:4px;"></div><div class="t" style="left:1662px;top:724.3px;font-size:12px;color:#333;">All</div><div class="a" style="left:1874px;top:723px;width:12px;height:12px;background:#c8ccd0;border-radius:3px;"></div><div class="t" style="left:1532px;top:763.8px;font-size:12px;color:#1e4a5e;font-weight:bold;letter-spacing:-0.2px">MISC</div><div class="a" style="left:1573px;top:769px;width:282px;height:1px;background:#dde3e6"></div><div class="t" style="left:1532px;top:799.3px;font-size:12px;color:#333;">Author</div><div class="a" style="left:1652px;top:789px;width:243px;height:30px;background:#f0f2f2;border-radius:4px;"></div><div class="t" style="left:1664px;top:799.3px;font-size:12px;color:#9a9a9a;">&lt;Empty&gt;</div><div class="t" style="left:1532px;top:834.3px;font-size:12px;color:#333;">Description</div><div class="a" style="left:1652px;top:824px;width:243px;height:30px;background:#f0f2f2;border-radius:4px;"></div><div class="t" style="left:1664px;top:834.3px;font-size:12px;color:#9a9a9a;">&lt;Empty&gt;</div><div class="t" style="left:1532px;top:869.3px;font-size:12px;color:#333;">Language</div><div class="a" style="left:1652px;top:859px;width:213px;height:30px;background:#f0f2f2;border-radius:4px;"></div><div class="t" style="left:1662px;top:869.3px;font-size:12px;color:#333;">Default</div><div class="a" style="left:1874px;top:868px;width:12px;height:12px;background:#c8ccd0;border-radius:3px;"></div><div class="t" style="left:1532px;top:904.3px;font-size:12px;color:#333;">Start Page Number</div><div class="a" style="left:1652px;top:894px;width:243px;height:30px;background:#f0f2f2;border-radius:4px;"></div><div class="t" style="left:1770px;top:904.3px;font-size:12px;color:#333;">1</div><svg class="a" style="left:1516px;top:79px" width="393" height="834" viewBox="1516 79 393 834"><path d="M1875.8 151.4 L1880 146.6 L1884.2 151.4" stroke="#333" stroke-width="1" fill="none" stroke-linecap="round" stroke-linejoin="round"/><path d="M1875.8 181.6 L1880 186.4 L1884.2 181.6" stroke="#333" stroke-width="1" fill="none" stroke-linecap="round" stroke-linejoin="round"/><path d="M1875.8 226.4 L1880 221.6 L1884.2 226.4" stroke="#333" stroke-width="1" fill="none" stroke-linecap="round" stroke-linejoin="round"/><path d="M1845.8 256.6 L1850 261.4 L1854.2 256.6" stroke="#333" stroke-width="1" fill="none" stroke-linecap="round" stroke-linejoin="round"/><path d="M1844.0 329 H1855.0 M1849.5 323.5 V334.5" stroke="#333" stroke-width="1.2"/><path d="M1874 324.5 H1886" stroke="#333" stroke-width="1"/><path d="M1874 328.5 H1886" stroke="#333" stroke-width="1"/><path d="M1874 332.5 H1886" stroke="#333" stroke-width="1"/><path d="M1845.8 361.6 L1850 366.4 L1854.2 361.6" stroke="#333" stroke-width="1" fill="none" stroke-linecap="round" stroke-linejoin="round"/><path d="M1874 361.5 V358 H1877.5 M1882.5 358 H1886 V361.5 M1886 366.5 V370 H1882.5 M1877.5 370 H1874 V366.5 M1874.3 358.3 L1878 362 M1885.7 358.3 L1882 362 M1885.7 369.7 L1882 366 M1874.3 369.7 L1878 366" stroke="#333" stroke-width="1.1" fill="none"/><path d="M1875.8 406.4 L1880 401.6 L1884.2 406.4" stroke="#333" stroke-width="1" fill="none" stroke-linecap="round" stroke-linejoin="round"/><path d="M1844.0 439 H1855.0 M1849.5 433.5 V444.5" stroke="#333" stroke-width="1.2"/><path d="M1874 434.5 H1886" stroke="#333" stroke-width="1"/><path d="M1874 438.5 H1886" stroke="#333" stroke-width="1"/><path d="M1874 442.5 H1886" stroke="#333" stroke-width="1"/><path d="M1844.0 474 H1855.0 M1849.5 468.5 V479.5" stroke="#333" stroke-width="1.2"/><path d="M1874 469.5 H1886" stroke="#333" stroke-width="1"/><path d="M1874 473.5 H1886" stroke="#333" stroke-width="1"/><path d="M1874 477.5 H1886" stroke="#333" stroke-width="1"/><path d="M1875.8 516.4 L1880 511.6 L1884.2 516.4" stroke="#333" stroke-width="1" fill="none" stroke-linecap="round" stroke-linejoin="round"/><path d="M1875.8 546.6 L1880 551.4 L1884.2 546.6" stroke="#333" stroke-width="1" fill="none" stroke-linecap="round" stroke-linejoin="round"/><path d="M1875.8 626.4 L1880 621.6 L1884.2 626.4" stroke="#333" stroke-width="1" fill="none" stroke-linecap="round" stroke-linejoin="round"/><path d="M1844.0 659 H1855.0 M1849.5 653.5 V664.5" stroke="#333" stroke-width="1.2"/><path d="M1874 654.5 H1886" stroke="#333" stroke-width="1"/><path d="M1874 658.5 H1886" stroke="#333" stroke-width="1"/><path d="M1874 662.5 H1886" stroke="#333" stroke-width="1"/><path d="M1845.8 691.6 L1850 696.4 L1854.2 691.6" stroke="#333" stroke-width="1" fill="none" stroke-linecap="round" stroke-linejoin="round"/><path d="M1845.8 726.6 L1850 731.4 L1854.2 726.6" stroke="#333" stroke-width="1" fill="none" stroke-linecap="round" stroke-linejoin="round"/><path d="M1875.8 771.4 L1880 766.6 L1884.2 771.4" stroke="#333" stroke-width="1" fill="none" stroke-linecap="round" stroke-linejoin="round"/><path d="M1845.8 871.6 L1850 876.4 L1854.2 871.6" stroke="#333" stroke-width="1" fill="none" stroke-linecap="round" stroke-linejoin="round"/><path d="M1661.8 908.6 H1672" stroke="#888" stroke-width="1.3"/><path d="M1874.0 908.6 H1885.0 M1879.5 903.1 V914.1" stroke="#333" stroke-width="1.2"/></svg></div>
<svg class="a" style="left:1400px;top:40px" width="509" height="903" viewBox="1400 40 509 903" ><path d="M1538.64 47.73 L1538.88 45.36 L1543.12 45.36 L1543.36 47.73 L1545.25 48.82 L1547.43 47.85 L1549.54 51.51 L1547.61 52.91 L1547.61 55.09 L1549.54 56.49 L1547.43 60.15 L1545.25 59.18 L1543.36 60.27 L1543.12 62.64 L1538.88 62.64 L1538.64 60.27 L1536.75 59.18 L1534.57 60.15 L1532.46 56.49 L1534.39 55.09 L1534.39 52.91 L1532.46 51.51 L1534.57 47.85 L1536.75 48.82 Z" stroke="#1e4a5e" stroke-width="1.5" fill="none" stroke-linecap="round" stroke-linejoin="round"/><circle cx="1541" cy="54" r="2.9" stroke="#6e8d9a" stroke-width="1.3" fill="none"/><ellipse cx="1660" cy="47.6" rx="7.2" ry="3" stroke="#2d3a40" stroke-width="1.5" fill="none"/><path d="M1652.8 47.6 V60 Q1652.8 63 1660 63 Q1667.2 63 1667.2 60 V47.6 M1652.8 53.8 Q1652.8 56.8 1660 56.8 Q1667.2 56.8 1667.2 53.8" stroke="#2d3a40" stroke-width="1.5" fill="none" stroke-linecap="round" stroke-linejoin="round"/><rect x="1876" y="46.9" width="18.2" height="14" rx="3" stroke="#2d3d44" stroke-width="1.5" fill="none"/><path d="M1888.4 46.9 V60.9" stroke="#2d3d44" stroke-width="1.5"/><path d="M1879.5 53.9 H1885.3 M1882.8 51.2 L1885.5 53.9 L1882.8 56.6" stroke="#1e5f7a" stroke-width="1.6" fill="none" stroke-linecap="round" stroke-linejoin="round"/><circle cx="1848.5" cy="107.5" r="4.2" stroke="#a6c0cb" stroke-width="1" fill="none"/><path d="M1851.5 110.6 L1855.8 114.8" stroke="#a6c0cb" stroke-width="1" fill="none" stroke-linecap="round" stroke-linejoin="round"/><rect x="1879" y="104" width="2" height="2" fill="#a6c0cb"/><rect x="1879" y="108" width="2" height="2" fill="#a6c0cb"/><rect x="1879" y="112" width="2" height="2" fill="#a6c0cb"/><path d="M1420.8 898.3 H1432 M1426.4 892.7 V903.9" stroke="#1e4a5e" stroke-width="1.2"/><rect x="1662.6" y="924.5" width="9" height="9" rx="2.2" stroke="#2d3a40" stroke-width="1.3" fill="none"/><path d="M1665.6 924.5 V933.5 M1668.6 924.5 V933.5 M1662.6 927.5 H1671.6 M1662.6 930.5 H1671.6" stroke="#2d3a40" stroke-width="1.1"/><path d="M1693 925 V929.5 A3.6 3.6 0 0 0 1700.2 929.5" stroke="#2d3a40" stroke-width="1.2" fill="none" stroke-linecap="round" stroke-linejoin="round"/><path d="M1695.4 926 V929.5 A1.2 1.2 0 0 0 1697.8 929.5" stroke="#2d3a40" stroke-width="1.1" fill="none" stroke-linecap="round" stroke-linejoin="round"/><path d="M1698.6 933 V925.4 Q1698.6 924.2 1699.8 924.2 Q1701 924.2 1701 925.4 V930.5" stroke="#b5bcc0" stroke-width="1" fill="none" stroke-linecap="round" stroke-linejoin="round"/><path d="M1690.2 922.2 L1703.8 935.6" stroke="#2d3a40" stroke-width="1.2" fill="none" stroke-linecap="round" stroke-linejoin="round"/><rect x="1724.2" y="923.3" width="5.6" height="11.4" rx="1.4" stroke="#2d3a40" stroke-width="1.3" fill="none"/><path d="M1724.2 926.2 H1726 M1724.2 929 H1726.8 M1724.2 931.8 H1726" stroke="#2d3a40" stroke-width="0.9"/><rect x="1742" y="922" width="1" height="14.5" fill="#e2e6e7"/><rect x="1848" y="922" width="1" height="14.5" fill="#e2e6e7"/><rect x="1879" y="922" width="1" height="14.5" fill="#e2e6e7"/><path d="M1752.9 928.9 H1763" stroke="#888" stroke-width="1.4"/><path d="M1827 928.5 H1838 M1832.5 923 V934" stroke="#2d3a40" stroke-width="1.2"/><path d="M1895 923.5 Q1900.8 923.8 1900.8 929.5 Q1900.8 934.6 1897.8 934.6 Q1896 934.6 1895.6 932.6 Q1895.2 930.5 1893.5 930.2 Q1891.7 930.1 1890.7 931.5 Q1889 932 1889 929.6 Q1889.2 923.3 1895 923.5 Z" stroke="#2d3a40" stroke-width="1.2" fill="none" stroke-linecap="round" stroke-linejoin="round"/><path d="M1897 927 L1897.3 929" stroke="#b5bcc0" stroke-width="0.9"/></svg></body></html>
